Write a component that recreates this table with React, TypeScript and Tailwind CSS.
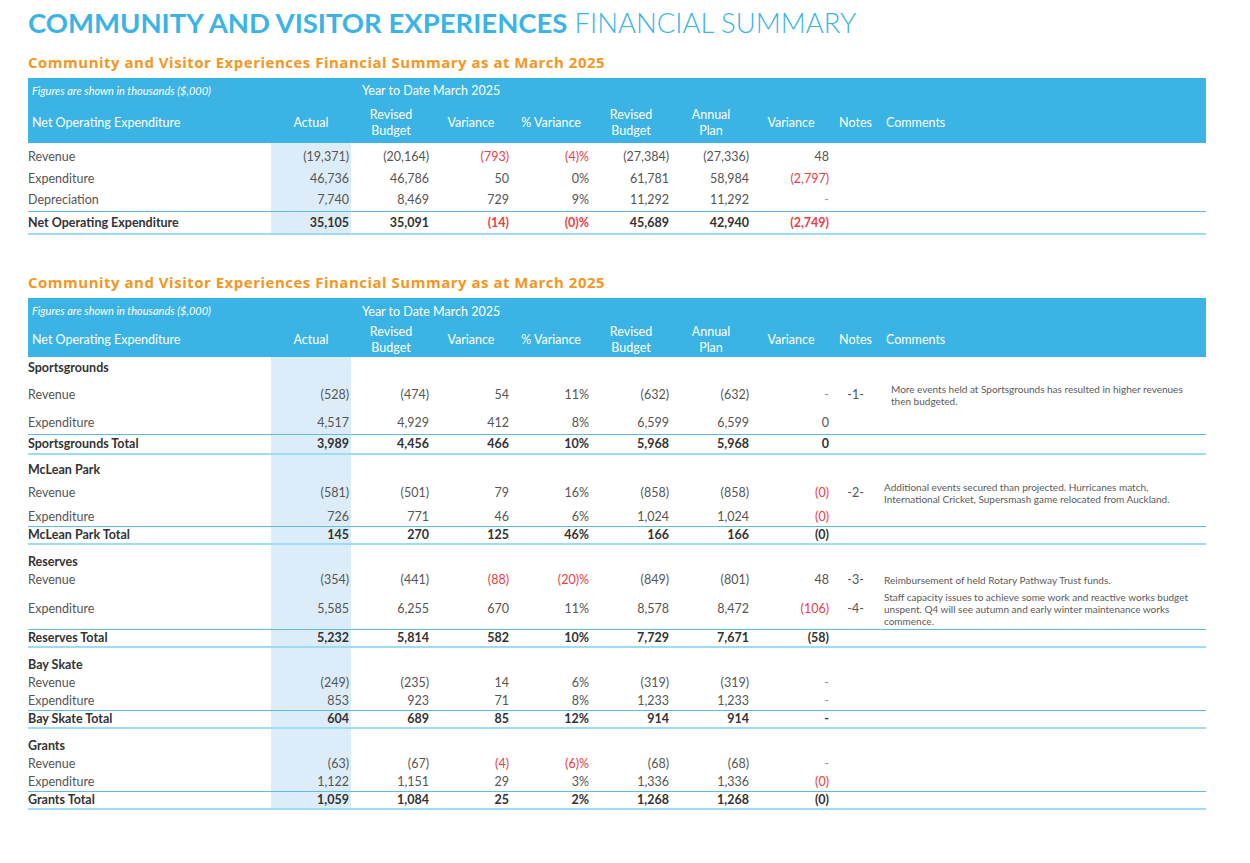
import React from "react"

type Row = {
  kind: "section" | "item" | "total"
  label: string
  vals?: string[]
  note?: string
  comment?: string
  h: string
  pt?: string
  line?: "thin" | "thick"
  indent?: boolean
}

// "!" prefix = red value
const table1: Row[] = [
  { kind: "item", label: "Revenue", vals: ["(19,371)", "(20,164)", "!(793)", "!(4)%", "(27,384)", "(27,336)", "48"], h: "h-[24px]", pt: "pt-[4px]" },
  { kind: "item", label: "Expenditure", vals: ["46,736", "46,786", "50", "0%", "61,781", "58,984", "!(2,797)"], h: "h-[22px]", pt: "pt-[2px]" },
  { kind: "item", label: "Depreciation", vals: ["7,740", "8,469", "729", "9%", "11,292", "11,292", "-"], h: "h-[22px]", line: "thin" },
  { kind: "total", label: "Net Operating Expenditure", vals: ["35,105", "35,091", "!(14)", "!(0)%", "45,689", "42,940", "!(2,749)"], h: "h-[23px]", pt: "pt-[1px]", line: "thick" },
]

const table2: Row[] = [
  { kind: "section", label: "Sportsgrounds", h: "h-[22px]" },
  {
    kind: "item",
    label: "Revenue",
    vals: ["(528)", "(474)", "54", "11%", "(632)", "(632)", "-"],
    note: "-1-",
    comment: "More events held at Sportsgrounds has resulted in higher revenues\nthen budgeted.",
    indent: true,
    h: "h-[32px]",
  },
  { kind: "item", label: "Expenditure", vals: ["4,517", "4,929", "412", "8%", "6,599", "6,599", "0"], h: "h-[23px]", pt: "pt-[1px]", line: "thin" },
  { kind: "total", label: "Sportsgrounds Total", vals: ["3,989", "4,456", "466", "10%", "5,968", "5,968", "0"], h: "h-[20px]", line: "thick" },

  { kind: "section", label: "McLean Park", h: "h-[27px]", pt: "pt-[3px]" },
  {
    kind: "item",
    label: "Revenue",
    vals: ["(581)", "(501)", "79", "16%", "(858)", "(858)", "!(0)"],
    note: "-2-",
    comment: "Additional events secured than projected. Hurricanes match,\nInternational Cricket, Supersmash game relocated from Auckland.",
    h: "h-[24px]",
  },
  { kind: "item", label: "Expenditure", vals: ["726", "771", "46", "6%", "1,024", "1,024", "!(0)"], h: "h-[21px]", pt: "pt-[3px]", line: "thin" },
  { kind: "total", label: "McLean Park Total", vals: ["145", "270", "125", "46%", "166", "166", "(0)"], h: "h-[18px]", line: "thick" },

  { kind: "section", label: "Reserves", h: "h-[27px]", pt: "pt-[8px]" },
  {
    kind: "item",
    label: "Revenue",
    vals: ["(354)", "(441)", "!(88)", "!(20)%", "(849)", "(801)", "48"],
    note: "-3-",
    comment: "Reimbursement of held Rotary Pathway Trust funds.",
    h: "h-[17px]",
  },
  {
    kind: "item",
    label: "Expenditure",
    vals: ["5,585", "6,255", "670", "11%", "8,578", "8,472", "!(106)"],
    note: "-4-",
    comment: "Staff capacity issues to achieve some work and reactive works budget\nunspent. Q4 will see autumn and early winter maintenance works\ncommence.",
    h: "h-[41px]",
    pt: "pt-[2px]",
    line: "thin",
  },
  { kind: "total", label: "Reserves Total", vals: ["5,232", "5,814", "582", "10%", "7,729", "7,671", "(58)"], h: "h-[18px]", pt: "pt-[1px]", line: "thick" },

  { kind: "section", label: "Bay Skate", h: "h-[27px]", pt: "pt-[7px]" },
  { kind: "item", label: "Revenue", vals: ["(249)", "(235)", "14", "6%", "(319)", "(319)", "-"], h: "h-[18px]" },
  { kind: "item", label: "Expenditure", vals: ["853", "923", "71", "8%", "1,233", "1,233", "-"], h: "h-[18px]", line: "thin" },
  { kind: "total", label: "Bay Skate Total", vals: ["604", "689", "85", "12%", "914", "914", "-"], h: "h-[18px]", line: "thick" },

  { kind: "section", label: "Grants", h: "h-[27px]", pt: "pt-[8px]" },
  { kind: "item", label: "Revenue", vals: ["(63)", "(67)", "!(4)", "!(6)%", "(68)", "(68)", "-"], h: "h-[18px]" },
  { kind: "item", label: "Expenditure", vals: ["1,122", "1,151", "29", "3%", "1,336", "1,336", "!(0)"], h: "h-[18px]", line: "thin" },
  { kind: "total", label: "Grants Total", vals: ["1,059", "1,084", "25", "2%", "1,268", "1,268", "(0)"], h: "h-[18px]", pt: "pt-[1px]", line: "thick" },
]

function Header({ h }: { h: string }) {
  return (
    <thead>
      <tr className={`${h} bg-[#3bb4e5] text-white leading-[16px]`}>
        <td className="pl-[4px] pt-[3px] text-[11px] italic align-middle">Figures are shown in thousands ($,000)</td>
        <td colSpan={4} className="pt-[4px] text-center text-[12.5px] align-middle">
          Year to Date March 2025
        </td>
        <td colSpan={5}></td>
      </tr>
    </thead>
  )
}

function HeaderLabels({ h }: { h: string }) {
  return (
    <tr className={`${h} bg-[#3bb4e5] text-white text-[12.5px] leading-[16px] [&>td]:pt-[2px] [&>td]:align-middle`}>
      <td className="pl-[4px]">Net Operating Expenditure</td>
      <td className="text-center">Actual</td>
      <td className="text-center">
        Revised
        <br />
        Budget
      </td>
      <td className="text-center">Variance</td>
      <td className="text-center">% Variance</td>
      <td className="text-center">
        Revised
        <br />
        Budget
      </td>
      <td className="text-center">
        Annual
        <br />
        Plan
      </td>
      <td className="text-center">Variance</td>
      <td className="text-center">Notes</td>
      <td className="pl-[6px]">Comments</td>
    </tr>
  )
}

function BodyRow({ row }: { row: Row }) {
  const border =
    row.line === "thin"
      ? "border-b border-[#5dbde8]"
      : row.line === "thick"
        ? "border-b-2 border-[#9edcf5]"
        : ""
  const bold = row.kind !== "item"
  const base = `${row.pt ?? ""} ${border} align-middle`
  return (
    <tr className={`${row.h} text-[12.5px] leading-[14px]`}>
      <td className={`${base} ${bold ? "font-bold text-[#333333]" : "text-[#555555]"}`}>{row.label}</td>
      {Array.from({ length: 7 }).map((_, i) => {
        const v = row.vals?.[i] ?? ""
        const red = v.startsWith("!")
        const text = red ? v.slice(1) : v
        const color = red ? "text-[#ee3b43]" : bold ? "text-[#333333]" : text === "-" ? "text-[#999999]" : "text-[#555555]"
        return (
          <td
            key={i}
            className={`${base} pr-[2px] text-right ${bold ? "font-bold" : ""} ${color} ${i === 0 ? "bg-[#dcedf9]" : ""}`}
          >
            {text}
          </td>
        )
      })}
      <td className={`${base} text-center text-[#555555]`}>{row.note}</td>
      <td
        className={`${base} ${row.indent ? "pl-[11px]" : "pl-[4px]"} text-[10px] leading-[12px] whitespace-pre-line text-[#5a5a5a]`}
      >
        {row.comment}
      </td>
    </tr>
  )
}

function Cols() {
  return (
    <colgroup>
      <col className="w-[243px]" />
      <col className="w-[80px]" />
      <col className="w-[80px]" />
      <col className="w-[80px]" />
      <col className="w-[80px]" />
      <col className="w-[80px]" />
      <col className="w-[80px]" />
      <col className="w-[80px]" />
      <col className="w-[49px]" />
      <col className="w-[326px]" />
    </colgroup>
  )
}

function SummaryTable({ rows, headH, secondH }: { rows: Row[]; headH: string; secondH: string }) {
  return (
    <table className="w-[1178px] table-fixed border-collapse">
      <Cols />
      <Header h={headH} />
      <tbody>
        <HeaderLabels h={secondH} />
        {rows.map((r, i) => (
          <BodyRow key={i} row={r} />
        ))}
      </tbody>
    </table>
  )
}

export default function App() {
  return (
    <div className="min-h-screen w-[1250px] bg-white pl-[28px] pt-[6px] font-['Lato',sans-serif]">
      <h1 className="text-[27.5px] leading-[34px] text-[#3bb4e5]">
        <span className="font-bold">COMMUNITY AND VISITOR EXPERIENCES</span>{" "}
        <span className="font-light">FINANCIAL SUMMARY</span>
      </h1>

      <h2 className="mt-[13px] font-['Open_Sans',sans-serif] text-[15px] leading-[18px] font-bold tracking-[0.5px] text-[#f5961f]">
        Community and Visitor Experiences Financial Summary as at March 2025
      </h2>
      <div className="mt-[7px]">
        <SummaryTable rows={table1} headH="h-[22px]" secondH="h-[43px]" />
      </div>

      <h2 className="mt-[38px] font-['Open_Sans',sans-serif] text-[15px] leading-[18px] font-bold tracking-[0.5px] text-[#f5961f]">
        Community and Visitor Experiences Financial Summary as at March 2025
      </h2>
      <div className="mt-[7px]">
        <SummaryTable rows={table2} headH="h-[23px]" secondH="h-[36px]" />
      </div>
    </div>
  )
}
